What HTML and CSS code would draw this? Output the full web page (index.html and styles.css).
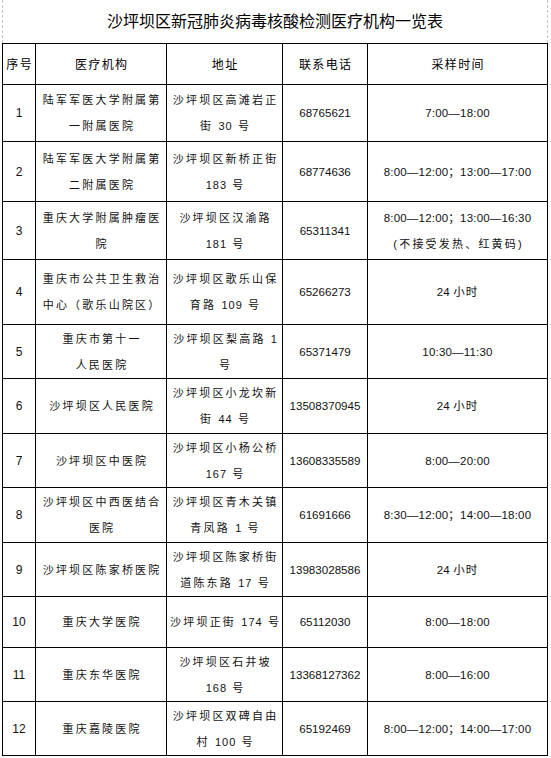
FILE: index.html
```html
<!DOCTYPE html>
<html lang="zh-CN">
<head>
<meta charset="utf-8">
<title>沙坪坝区新冠肺炎病毒核酸检测医疗机构一览表</title>
<link rel="stylesheet" href="styles.css">
</head>
<body>
<div class="page">
  <div class="title">沙坪坝区新冠肺炎病毒核酸检测医疗机构一览表</div>
  <div class="table">
    <div class="cell head"><span class="hd">序号</span></div>
    <div class="cell head"><span class="hd">医疗机构</span></div>
    <div class="cell head"><span class="hd">地址</span></div>
    <div class="cell head"><span class="hd">联系电话</span></div>
    <div class="cell head"><span class="hd">采样时间</span></div>

    <div class="cell num">1</div>
    <div class="cell"><span class="cn">陆军军医大学附属第<br>一附属医院</span></div>
    <div class="cell"><span class="cn">沙坪坝区高滩岩正<br>街 <span class="d">30</span> 号</span></div>
    <div class="cell ph">68765621</div>
    <div class="cell tm">7:00—18:00</div>

    <div class="cell num">2</div>
    <div class="cell"><span class="cn">陆军军医大学附属第<br>二附属医院</span></div>
    <div class="cell"><span class="cn">沙坪坝区新桥正街<br><span class="d">183</span> 号</span></div>
    <div class="cell ph">68774636</div>
    <div class="cell tm">8:00—12:00；13:00—17:00</div>

    <div class="cell num">3</div>
    <div class="cell"><span class="cn">重庆大学附属肿瘤医<br>院</span></div>
    <div class="cell"><span class="cn">沙坪坝区汉渝路<br><span class="d">181</span> 号</span></div>
    <div class="cell ph">65311341</div>
    <div class="cell tm"><span>8:00—12:00；13:00—16:30<br><span class="cn">(不接受发热、红黄码)</span></span></div>

    <div class="cell num">4</div>
    <div class="cell"><span class="cn">重庆市公共卫生救治<br>中心（歌乐山院区）</span></div>
    <div class="cell"><span class="cn">沙坪坝区歌乐山保<br>育路 <span class="d">109</span> 号</span></div>
    <div class="cell ph">65266273</div>
    <div class="cell tm"><span>24 <span class="cj">小时</span></span></div>

    <div class="cell num">5</div>
    <div class="cell"><span class="cn">重庆市第十一<br>人民医院</span></div>
    <div class="cell"><span class="cn">沙坪坝区梨高路 <span class="d">1</span><br>号</span></div>
    <div class="cell ph">65371479</div>
    <div class="cell tm">10:30—11:30</div>

    <div class="cell num">6</div>
    <div class="cell"><span class="cn">沙坪坝区人民医院</span></div>
    <div class="cell"><span class="cn">沙坪坝区小龙坎新<br>街 <span class="d">44</span> 号</span></div>
    <div class="cell ph">13508370945</div>
    <div class="cell tm"><span>24 <span class="cj">小时</span></span></div>

    <div class="cell num">7</div>
    <div class="cell"><span class="cn">沙坪坝区中医院</span></div>
    <div class="cell"><span class="cn">沙坪坝区小杨公桥<br><span class="d">167</span> 号</span></div>
    <div class="cell ph">13608335589</div>
    <div class="cell tm">8:00—20:00</div>

    <div class="cell num">8</div>
    <div class="cell"><span class="cn">沙坪坝区中西医结合<br>医院</span></div>
    <div class="cell"><span class="cn">沙坪坝区青木关镇<br>青凤路 <span class="d">1</span> 号</span></div>
    <div class="cell ph">61691666</div>
    <div class="cell tm">8:30—12:00；14:00—18:00</div>

    <div class="cell num">9</div>
    <div class="cell"><span class="cn">沙坪坝区陈家桥医院</span></div>
    <div class="cell"><span class="cn">沙坪坝区陈家桥街<br>道陈东路 <span class="d">17</span> 号</span></div>
    <div class="cell ph">13983028586</div>
    <div class="cell tm"><span>24 <span class="cj">小时</span></span></div>

    <div class="cell num">10</div>
    <div class="cell"><span class="cn">重庆大学医院</span></div>
    <div class="cell"><span class="cn">沙坪坝正街 <span class="d">174</span> 号</span></div>
    <div class="cell ph">65112030</div>
    <div class="cell tm">8:00—18:00</div>

    <div class="cell num">11</div>
    <div class="cell"><span class="cn">重庆东华医院</span></div>
    <div class="cell"><span class="cn">沙坪坝区石井坡<br><span class="d">168</span> 号</span></div>
    <div class="cell ph">13368127362</div>
    <div class="cell tm">8:00—16:00</div>

    <div class="cell num">12</div>
    <div class="cell"><span class="cn">重庆嘉陵医院</span></div>
    <div class="cell"><span class="cn">沙坪坝区双碑自由<br>村 <span class="d">100</span> 号</span></div>
    <div class="cell ph">65192469</div>
    <div class="cell tm">8:00—12:00；14:00—17:00</div>
  </div>
</div>
</body>
</html>
```
FILE: styles.css
```css
html, body {
  margin: 0;
  padding: 0;
  background: #fff;
}

body {
  color: #111;
  font-family: "Liberation Sans", "Noto Sans CJK SC", sans-serif;
}

.page {
  width: 546px;
  margin-left: 2px;
}

.title {
  box-sizing: border-box;
  height: 43px;
  border-left: 1px dashed #c4c4c4;
  border-right: 1px dashed #c4c4c4;
  text-align: center;
  font-family: "Noto Sans CJK SC", sans-serif;
  font-size: 16px;
  font-weight: 400;
  line-height: 40px;
  color: #000;
  white-space: nowrap;
}

.table {
  display: grid;
  width: max-content;
  grid-template-columns: 33px 131px 116px 85px 180px;
  grid-template-rows: 41px 57px 60px 58px 65px 54px 55px 54px 55px 54px 51px 54px 54px;
  border-left: 1px solid #000;
  border-top: 1px solid #000;
}

.cell {
  display: flex;
  align-items: center;
  justify-content: center;
  text-align: center;
  border-right: 1px solid #000;
  border-bottom: 1px solid #000;
  line-height: 26px;
  white-space: nowrap;
  font-size: 12px;
}

.hd {
  font-family: "Noto Sans CJK SC", sans-serif;
  font-size: 12px;
  letter-spacing: 1.3px;
  margin-right: -1.3px;
  color: #000;
}

.cn {
  font-family: "Liberation Sans", "Noto Sans CJK SC", sans-serif;
  font-size: 11px;
  letter-spacing: 2.2px;
  margin-right: -2.2px;
}

.cn .d {
  letter-spacing: 1px;
}

.cj {
  letter-spacing: 1px;
}

.num {
  font-size: 12px;
}

.ph {
  font-size: 11.6px;
}

.tm {
  font-size: 11.5px;
  letter-spacing: 0.2px;
}
```
